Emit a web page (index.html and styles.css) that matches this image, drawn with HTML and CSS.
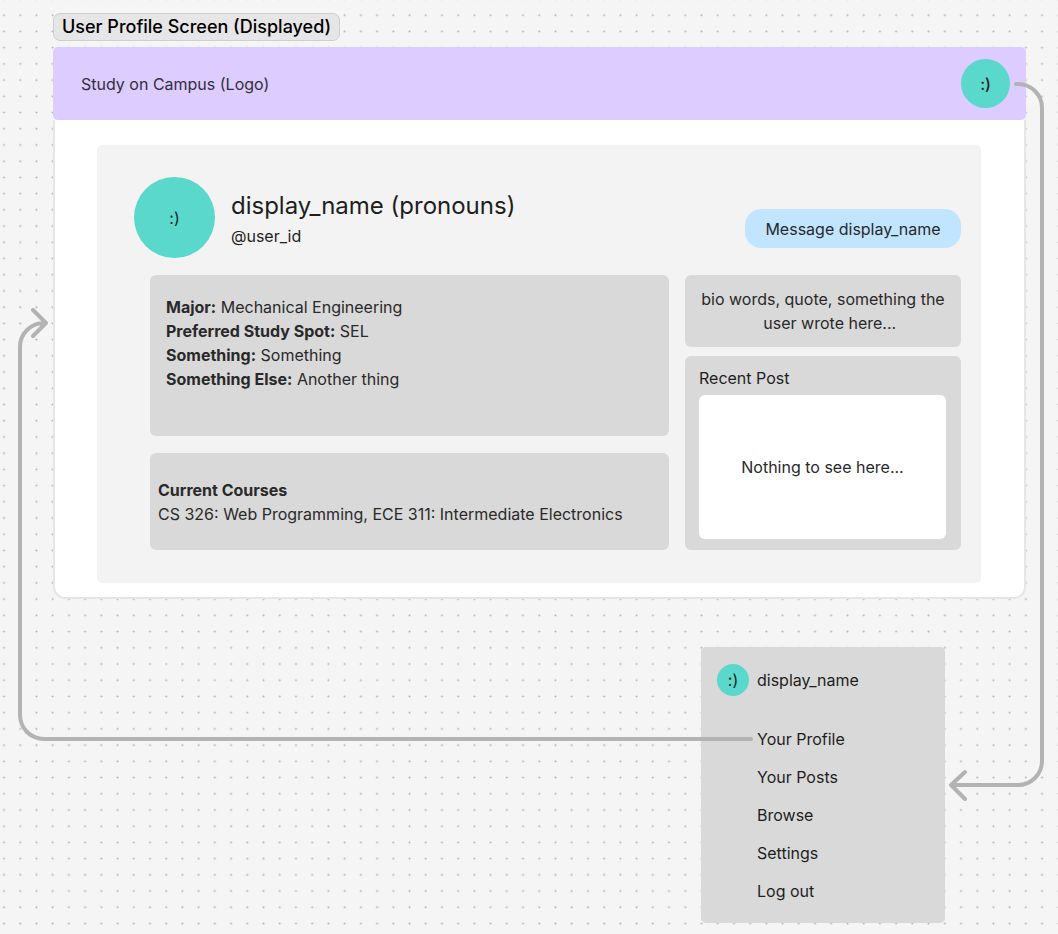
FILE: index.html
```html
<!DOCTYPE html>
<html lang="en">
<head>
<meta charset="utf-8">
<meta name="viewport" content="width=device-width, initial-scale=1">
<title>User Profile Screen</title>
<link rel="stylesheet" href="styles.css">
</head>
<body>
<div class="board">
  <svg class="dots" aria-hidden="true">
    <defs>
      <pattern id="grid" x="-4.1" y="7.1" width="16.22" height="16.22" patternUnits="userSpaceOnUse">
        <circle cx="8.11" cy="8.11" r="1" fill="#b0b0b0"/>
      </pattern>
    </defs>
    <rect width="100%" height="100%" fill="url(#grid)"/>
  </svg>

  <h1 class="label">User Profile Screen (Displayed)</h1>

  <section class="frame">
    <header class="topbar">
      <span class="logo">Study on Campus (Logo)</span>
      <button class="avatar avatar-md" type="button">:)</button>
    </header>
    <main class="screen">
      <article class="profile">
        <div class="identity">
          <div class="avatar avatar-lg">:)</div>
          <div class="names">
            <h2 class="name">display_name (pronouns)</h2>
            <p class="handle">@user_id</p>
          </div>
          <button class="message" type="button">Message display_name</button>
        </div>
        <div class="columns">
          <div class="column column-main">
            <section class="box about">
              <p><b>Major:</b> Mechanical Engineering</p>
              <p><b>Preferred Study Spot:</b> SEL</p>
              <p><b>Something:</b> Something</p>
              <p><b>Something Else:</b> Another thing</p>
            </section>
            <section class="box courses">
              <h3 class="courses-title">Current Courses</h3>
              <p>CS 326: Web Programming, ECE 311: Intermediate Electronics</p>
            </section>
          </div>
          <div class="column column-side">
            <p class="box bio">bio words, quote, something the<br>&nbsp;&nbsp;&nbsp;user wrote here...</p>
            <section class="box recent">
              <h3 class="recent-title">Recent Post</h3>
              <p class="post">Nothing to see here...</p>
            </section>
          </div>
        </div>
      </article>
    </main>
  </section>

  <nav class="menu">
    <div class="menu-user">
      <span class="avatar avatar-sm">:)</span>
      <span>display_name</span>
    </div>
    <ul class="menu-list">
      <li><a href="#profile">Your Profile</a></li>
      <li><a href="#posts">Your Posts</a></li>
      <li><a href="#browse">Browse</a></li>
      <li><a href="#settings">Settings</a></li>
      <li><a href="#logout">Log out</a></li>
    </ul>
  </nav>

  <svg class="wire wire-menu" width="100" height="724" viewBox="0 0 100 724" aria-hidden="true">
    <path d="M68 4H70A24 24 0 0 1 94 28V681A24 24 0 0 1 70 705H3M17 692L3 705L17 719"/>
  </svg>
  <svg class="wire wire-arrow" width="34" height="40" viewBox="0 0 34 40" aria-hidden="true">
    <path d="M4 40V39A24 24 0 0 1 28 15H30M17 2L30 15L17 28"/>
  </svg>
  <div class="wire-profile"></div>
</div>
</body>
</html>
```

FILE: styles.css
```css
* {
  box-sizing: border-box;
}

body,
h1,
h2,
h3,
p,
ul {
  margin: 0;
  padding: 0;
}

body {
  background: #f5f5f5;
  color: #1e1e1e;
  font: 400 16px/24px Inter, "Liberation Sans", sans-serif;
}

button {
  border: 0;
  padding: 0;
  color: inherit;
  font: inherit;
  cursor: pointer;
}

.board {
  position: relative;
  display: flex;
  flex-direction: column;
  min-height: 100vh;
  padding: 13px 32px 11px 53px;
}

.dots {
  position: absolute;
  inset: 0;
  width: 100%;
  height: 100%;
}

.label {
  position: relative;
  align-self: flex-start;
  padding: 1px 8px;
  border: 1px solid #cfcfcf;
  border-radius: 7px;
  background: #e6e6e6;
  color: #000;
  font-size: 18px;
  font-weight: 500;
  line-height: 24px;
}

.frame {
  position: relative;
  margin-top: 6px;
}

.topbar {
  display: flex;
  align-items: center;
  justify-content: space-between;
  height: 73px;
  padding: 0 16px 0 28px;
  border-radius: 5px;
  background: #dcccff;
}

.logo {
  color: #332f3b;
}

.screen {
  position: relative;
  padding: 25px 43px 14px 42px;
  border: 2px solid #e6e6e6;
  border-top: 0;
  border-radius: 0 0 12px 12px;
  background: #fff;
}

.avatar {
  display: flex;
  flex: none;
  align-items: center;
  justify-content: center;
  border-radius: 50%;
  background: #5ad8cc;
}

.avatar-sm {
  width: 32px;
  height: 32px;
}

.avatar-md {
  width: 49px;
  height: 49px;
  font-weight: 500;
}

.avatar-lg {
  width: 81px;
  height: 81px;
}

.profile {
  padding: 32px 20px 33px 37px;
  border-radius: 5px;
  background: #f3f3f3;
}

.identity {
  display: flex;
  align-items: center;
}

.names {
  flex: 1;
  padding-left: 16px;
}

.name {
  font-size: 24px;
  font-weight: 400;
  line-height: 36px;
}

.message {
  align-self: flex-end;
  width: 216px;
  height: 39px;
  margin-bottom: 10px;
  border-radius: 16px;
  background: #c2e5ff;
  color: #26292c;
}

.columns {
  display: grid;
  grid-template-columns: minmax(0, 1fr) 276px;
  gap: 16px;
  margin-top: 17px;
  padding-left: 16px;
}

.column {
  display: flex;
  flex-direction: column;
}

.column-main {
  gap: 17px;
}

.column-side {
  gap: 9px;
}

.box {
  border-radius: 6px;
  background: #d9d9d9;
}

.about {
  min-height: 161px;
  padding: 20px 16px;
  color: #292929;
}

.about b {
  font-weight: 700;
}

.courses {
  flex: 1;
  padding: 25px 8px 24px;
  color: #292929;
}

.courses-title {
  font-size: 16px;
  font-weight: 700;
}

.bio {
  padding: 12px;
  color: #292929;
  text-align: center;
}

.recent {
  display: flex;
  flex: 1;
  flex-direction: column;
  gap: 5px;
  padding: 10px 15px 11px 14px;
}

.recent-title {
  font-size: 16px;
  font-weight: 400;
}

.post {
  display: flex;
  flex: 1;
  align-items: center;
  justify-content: center;
  min-height: 144px;
  border-radius: 6px;
  background: #fff;
  color: #292929;
}

.menu {
  position: relative;
  align-self: flex-end;
  width: 244px;
  margin: 48px 81px 0 0;
  padding: 17px 16px 13px;
  border-radius: 5px;
  background: #d9d9d9;
}

.menu-user {
  display: flex;
  align-items: center;
  gap: 8px;
}

.menu-list {
  margin-top: 24px;
  padding-left: 40px;
  line-height: 38px;
  list-style: none;
}

.menu a {
  color: inherit;
  text-decoration: none;
}

.wire {
  position: absolute;
  fill: none;
  stroke: #b3b3b3;
  stroke-width: 4;
  stroke-linecap: round;
  stroke-linejoin: round;
  pointer-events: none;
}

.wire-menu {
  top: 80px;
  right: 10px;
}

.wire-arrow {
  top: 308px;
  left: 16px;
}

.wire-profile {
  position: absolute;
  top: 347px;
  right: 307px;
  left: 18px;
  height: 394px;
  border: solid #b3b3b3;
  border-width: 0 0 4px 4px;
  border-bottom-left-radius: 26px;
  pointer-events: none;
}

.wire-profile::after {
  position: absolute;
  right: -2px;
  bottom: -4px;
  width: 4px;
  height: 4px;
  border-radius: 50%;
  background: #b3b3b3;
  content: "";
}
```
